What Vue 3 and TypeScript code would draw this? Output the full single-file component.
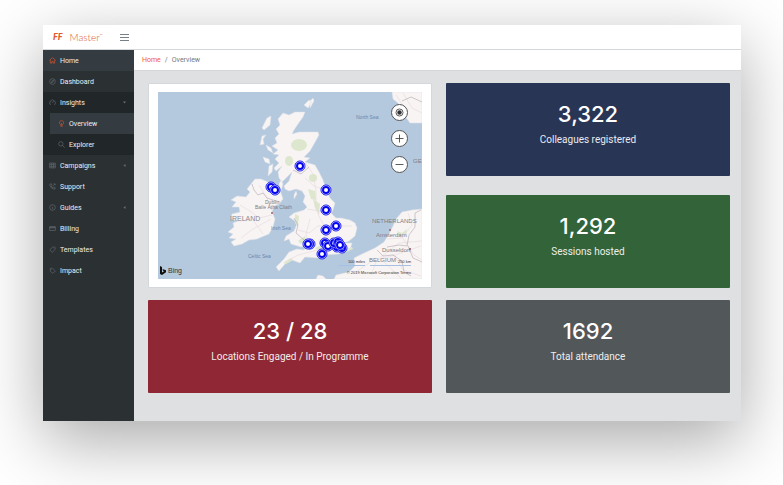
<script setup lang="ts">
import { ref } from 'vue'

interface NavItem {
  label: string
  icon: string
  current?: boolean
  expanded?: boolean
  collapsed?: boolean
  children?: { label: string; icon: string; current: boolean }[]
}

const icons: Record<string, string> = {
  home: 'M1 7.5 8 1.5l7 6M3 6.5V14h3.5v-4h3v4H13V6.5',
  compass: 'M8 1.5a6.5 6.5 0 1 0 0 13 6.5 6.5 0 0 0 0-13M11 5 9 9 5 11l2-4z',
  gauge: 'M3.5 13.5a6.5 6.5 0 1 1 9 0M8 9l2-4M3.5 9h1',
  bulb: 'M5.5 10.5C2 8 2.5 1.500 8 1.500s6 6.500 2.500 9V12h-5zM6 15h4M8 11V7',
  search: 'M6.5 1.5a5 5 0 1 0 0 10 5 5 0 0 0 0-10M10.2 10.2 15 15',
  grid: 'M1.5 2.5h13v11h-13zM1.5 6h13M1.5 10h13M6 2.5v11M10.5 2.5v11',
  phone: 'M2 2.5 5 1.5l2 4-2 1.5c1 2 2 3 4 4l1.5-2 4 2-1 3C7 14.5 1.5 9 2 2.5M10 6l4-4M10.5 2H14v3.5',
  info: 'M8 1.5a6.5 6.5 0 1 0 0 13 6.5 6.5 0 0 0 0-13M8 7v5M8 4v1',
  card: 'M1.5 3.5h13v9h-13zM1.5 6.5h13M1.5 5.5h13',
  tag: 'M2 8.5 9 2l5 1v5l-7 6.5zM11 5v.8',
  badge: 'M3 3h5l6.5 6L9 14.5 3 10zM5.5 5.5v.8',
}

const nav: NavItem[] = [
  { label: 'Home', icon: 'home', current: true },
  { label: 'Dashboard', icon: 'compass' },
  {
    label: 'Insights',
    icon: 'gauge',
    expanded: true,
    children: [
      { label: 'Overview', icon: 'bulb', current: true },
      { label: 'Explorer', icon: 'search', current: false },
    ],
  },
  { label: 'Campaigns', icon: 'grid', collapsed: true },
  { label: 'Support', icon: 'phone' },
  { label: 'Guides', icon: 'info', collapsed: true },
  { label: 'Billing', icon: 'card' },
  { label: 'Templates', icon: 'tag' },
  { label: 'Impact', icon: 'badge' },
]

const markers = ref<[number, number][]>([
  [142, 74], [113, 95], [117, 98], [168, 98], [168, 118], [168, 138], [178, 134],
  [152, 152], [150, 152], [167, 151], [170, 154], [164, 162], [179, 155], [184, 156],
  [176, 151], [180, 150], [182, 153],
])
</script>

<template>
  <div class="stage">
    <div class="window">
      <header class="topbar">
        <a href="#" class="brand"><span class="mark">FF</span><span class="name">Master<sup>™</sup></span></a>
        <button class="toggle" aria-label="Toggle menu"><i></i><i></i><i></i></button>
      </header>
      <div class="body">
        <nav class="sidebar" aria-label="Main">
          <div v-for="item in nav" :key="item.label" class="group" :class="{ open: item.expanded }">
            <a href="#" class="item" :class="{ current: item.current }">
              <svg class="icon" viewBox="0 0 16 16"><path :d="icons[item.icon]" /></svg>
              <span class="label">{{ item.label }}</span>
              <svg v-if="item.expanded" class="caret" viewBox="0 0 6 6"><path d="M0 1h6L3 5z" /></svg>
              <svg v-if="item.collapsed" class="caret" viewBox="0 0 6 6"><path d="M5 0v6L1 3z" /></svg>
            </a>
            <template v-if="item.children">
              <a v-for="child in item.children" :key="child.label" href="#" class="item sub" :class="{ current: child.current }">
                <svg class="icon" viewBox="0 0 16 16"><path :d="icons[child.icon]" /></svg>
                <span class="label">{{ child.label }}</span>
              </a>
            </template>
          </div>
        </nav>
        <div class="page">
          <nav class="crumbs" aria-label="Breadcrumb"><a href="#">Home</a><span>/</span><span>Overview</span></nav>
          <main class="cards">
            <section class="map-card">
              <div class="map">
                <svg class="chart" viewBox="0 0 264 187" preserveAspectRatio="xMidYMid slice">
                  <rect width="264" height="187" fill="#b4c9de" />
                  <g class="land">
                    <path d="M125 21 131 23 137 20 147 20 145 25 140 32 136 38 134 42 141 40 151 40 160 40 161 43 156 52 152 59 146 65 152 66 147 70 157 73 161 80 165 88 168 97 172 106 177 111 175 118 173 121 178 126 183 126 192 128 197 131 199 136 197 144 191 149 185 151 194 151 192 158 180 162 167 163 160 166 147 165 142 171 134 168 127 172 121 179 118 175 126 167 131 160 139 157 146 158 150 152 143 155 133 152 131 147 126 149 128 144 136 139 139 132 137 129 131 125 136 121 146 118 149 115 145 110 147 104 144 99 138 97 131 99 127 97 126 94 131 89 134 80 129 85 124 90 121 86 120 80 124 74 118 79 116 76 121 71 117 67 121 63 115 62 120 58 114 54 119 51 117 46 121 42 118 37 122 33 120 27z" />
                    <path d="M93 92 97 87 103 87 110 90 115 91 120 94 123 101 125 107 121 112 116 114 114 120 117 127 115 135 111 142 106 144 99 147 91 148 84 152 76 154 73 150 78 147 71 146 75 142 70 140 76 135 75 131 80 129 73 127 74 122 82 120 81 115 74 115 78 110 73 108 79 104 88 105 92 100 89 97z" />
                    <path d="M109 26 113 24 112 33 106 38 104 36zM104 44l4-1-3 4 1 5-4 1zM108 53l5 3 2 5-5-3zM105 65l6 2 1 5-5-2zM111 74l4-2-1 8-4 4zM121 92l2-4 2 4-2 7zM136 103l2-4 1 3-3 5zM146 13l5-5 3 2-4 6zM152 9l3-3 1 3-4 7z" />
                    <path d="M234 0 235 7 240 11 242 18 247 24 252 31 264 31V0z" />
                    <path d="M264 117 254 118 244 120 238 127 235 134 231 142 226 150 217 156 204 162 196 166 197 174 191 180 178 183 176 187H264z" />
                    <path d="M158 187 160 183 165 184 168 187z" />
                  </g>
                  <g class="park">
                    <ellipse cx="141" cy="53" rx="8" ry="6" />
                    <ellipse cx="131" cy="69" rx="4" ry="5" />
                    <ellipse cx="155" cy="86" rx="4" ry="4" />
                    <path d="M150 97l7 2 1 9-5-1zM155 107l7 5-1 11-4-7zM137 122l4 2-1 10-3-3zM140 149l7-5 1 5-5 3zM125 171l8-5 2 2-7 4zM157 156l10-4 1 4-8 2zM186 158l8-3 1 2-7 3zM239 139l5 2 5-4-1 6-7 1z" />
                  </g>
                  <g class="roads">
                    <path d="M147 70 155 82 158 99 158 112 161 124 168 138 178 151M147 86 156 94 166 98M149 117 161 119 175 120M140 138 151 141 160 134 178 134 194 134M127 170 140 163 152 160 169 155 185 155M151 155 148 142 152 127M160 149 178 137M182 156 167 142" />
                    <path d="M82 113 92 119 101 126 114 123M101 93 109 106 114 119M83 146 95 137 113 127M80 129 95 128 105 142" />
                    <path d="M198 180 214 169 234 164 263 154M213 183 219 168 241 151 264 149M229 147 244 146 254 133 250 121M235 162 245 178 263 184M226 170 244 187M244 145 256 163 264 168M238 3 249 20M245 1 254 16 264 21" />
                  </g>
                  <g class="border">
                    <path d="M94 92 96 98 100 103 105 101 109 106 115 108 122 110M135 78 143 82 151 75M136 126 140 133 138 141 146 148M219 158 225 164 235 163 244 169 246 180 253 184M229 155 241 153 249 154 251 143 257 135 257 121 263 118M250 154 255 166 264 170M244 9 253 5 264 10" />
                  </g>
                  <g class="sea">
                    <text x="198" y="27">North Sea</text>
                    <text x="113" y="138">Irish Sea</text>
                    <text x="90" y="166">Celtic Sea</text>
                  </g>
                  <g class="place">
                    <text x="107" y="112">Dublin</text>
                    <text x="97" y="117">Baile Átha Cliath</text>
                    <text x="218" y="145" class="city">Amsterdam</text>
                    <text x="224" y="160" class="city">Dusseldorf</text>
                    <text x="72" y="129" class="country">IRELAND</text>
                    <text x="214" y="131" class="city">NETHERLANDS</text>
                    <text x="211" y="170" class="city">BELGIUM</text>
                    <text x="255" y="71" class="city">GE</text>
                  </g>
                  <g fill="#a45c68"><circle cx="114" cy="121" r="1" /><circle cx="232" cy="138" r="1" /><circle cx="252" cy="157" r="1" /></g>
                  <g v-for="([x, y], i) in markers" :key="i" class="pin">
                    <circle :cx="x" :cy="y" r="5" class="halo" />
                    <circle :cx="x" :cy="y" r="3" class="ring" />
                  </g>
                </svg>
                <div class="controls">
                  <button aria-label="Locate me"><svg viewBox="0 0 17 17"><circle cx="8.5" cy="8.5" r="4" fill="none" stroke="#444" /><circle cx="8.5" cy="8.5" r="2.5" fill="#333" /></svg></button>
                  <button aria-label="Zoom in"><svg viewBox="0 0 17 17"><path d="M4 8.5h9M8.5 4v9" stroke="#444" /></svg></button>
                  <button aria-label="Zoom out"><svg viewBox="0 0 17 17"><path d="M4 8.5h9" stroke="#444" /></svg></button>
                </div>
                <div class="bing"><svg viewBox="0 0 6 9"><path d="M0 0 2 1v5.500L4 5.200 3 4.700 2.400 3 6 4.300v2L2 9 0 8z" /></svg>Bing</div>
                <div class="legal">
                  <div class="scales"><span>100 miles</span><span>250 km</span></div>
                  <div>© 2019 Microsoft Corporation <a href="#">Terms</a></div>
                </div>
              </div>
            </section>
            <div class="stack">
              <section class="stat navy"><strong>3,322</strong><span>Colleagues registered</span></section>
              <section class="stat green"><strong>1,292</strong><span>Sessions hosted</span></section>
            </div>
            <section class="stat red"><strong>23 / 28</strong><span>Locations Engaged / In Programme</span></section>
            <section class="stat slate"><strong>1692</strong><span>Total attendance</span></section>
          </main>
        </div>
      </div>
    </div>
  </div>
</template>

<style>
body { margin: 0; background: #fff; }
</style>

<style scoped>
* { box-sizing: border-box; }
a { color: inherit; text-decoration: none; }
button { padding: 0; border: 0; background: none; cursor: pointer; }
.stage {
  display: flex;
  min-height: 100vh;
  padding: 25px 42px 64px 43px;
  overflow: hidden;
  font-family: Roboto, "Liberation Sans", sans-serif;
}
.window {
  display: flex;
  flex: 1;
  flex-direction: column;
  background: #dfe0e2;
  box-shadow: 0 20px 64px rgba(0, 0, 0, 0.34);
}
.topbar {
  display: flex;
  align-items: center;
  height: 25px;
  padding-left: 10px;
  background: #fff;
  border-bottom: 1px solid #d5d8da;
}
.brand { display: flex; align-items: center; gap: 7px; width: 67px; color: #e0592c; }
.mark { font: italic 900 9px/12px Lato, sans-serif; }
.name { font: 300 10px/12px Lato, sans-serif; }
.name sup { font-size: 4px; line-height: 0; }
.toggle { display: flex; flex-direction: column; gap: 2px; width: 9px; }
.toggle i { height: 1px; background: #777f88; }
.body { display: flex; flex: 1; }
.sidebar { flex: 0 0 91px; background: #2b3033; color: #eceeef; font-size: 7px; }
.group.open { background: #212629; }
.item { display: flex; align-items: center; height: 21px; padding: 0 8px 0 6px; }
.item.current { background: #343b41; }
.sub { margin-left: 7px; padding-left: 8px; }
.icon { width: 7px; height: 7px; margin-right: 4px; fill: none; stroke: #626a6e; stroke-width: 1.5; }
.current .icon { stroke: #d95730; }
.label { flex: 1; white-space: nowrap; }
.caret { width: 3px; height: 3px; fill: #667077; }
.page { flex: 1; min-width: 0; }
.crumbs {
  display: flex;
  align-items: center;
  gap: 4px;
  height: 21px;
  padding-left: 8px;
  background: #fff;
  border-bottom: 1px solid #d5d7d9;
  color: #6f7982;
  font-size: 7px;
}
.crumbs a { color: #ef5b32; }
.cards { display: grid; grid-template-columns: 1fr 1fr; gap: 12px 14px; padding: 12px 11px 28px 14px; }
.map-card { padding: 8px 9px; background: #fff; border: 1px solid #d4d8dc; border-radius: 1px; }
.map { position: relative; overflow: hidden; }
.chart { display: block; width: 100%; }
.land { fill: #f7f4f3; stroke: #dfe0e8; stroke-width: 0.5; }
.park { fill: #dde7cd; }
.roads { fill: none; stroke: #e7d7dd; stroke-width: 0.6; }
.border { fill: none; stroke: #b3a4b1; stroke-width: 0.6; }
.sea { fill: #6d87ab; font: 5px "Liberation Sans", sans-serif; }
.place { fill: #7f7c85; font: 5px "Liberation Sans", sans-serif; }
.city { font-size: 6px; }
.country { fill: #8d8b93; font-size: 7px; }
.halo { fill: #fff; stroke: #1919f5; stroke-width: 1; }
.ring { fill: #fff; stroke: #0505ee; stroke-width: 2; }
.controls { position: absolute; top: 12px; right: 14px; display: grid; gap: 9px; }
.controls button { width: 17px; height: 17px; background: #fff; border: 1px solid #555; border-radius: 50%; }
.controls svg { display: block; width: 15px; height: 15px; }
.bing {
  position: absolute;
  bottom: 4px;
  left: 2px;
  display: flex;
  align-items: center;
  gap: 2px;
  color: #333;
  font: 7px/9px "Liberation Sans", sans-serif;
}
.bing svg { width: 6px; height: 9px; fill: #111; }
.legal {
  position: absolute;
  right: 11px;
  bottom: 3px;
  color: #333;
  font: 4px/6px "Liberation Sans", sans-serif;
  text-align: right;
}
.scales { display: flex; justify-content: flex-end; gap: 5px; margin-bottom: 4px; font-size: 4px; }
.scales span { width: 27px; border-bottom: 1px solid #a5c0e2; }
.scales span + span { width: 41px; }
.stack { display: flex; flex-direction: column; justify-content: space-between; }
.stat {
  display: flex;
  flex-direction: column;
  align-items: center;
  height: 93px;
  padding-top: 16px;
  border-radius: 1px;
  color: #fff;
  text-align: center;
}
.stat strong { font: 500 22px/30px Inter, sans-serif; }
.stat span { font-size: 10px; line-height: 14px; margin-top: 4px; opacity: 0.9; }
.navy { background: #293555; }
.green { background: #336339; }
.red { background: #8f2834; }
.slate { background: #525759; }
</style>
